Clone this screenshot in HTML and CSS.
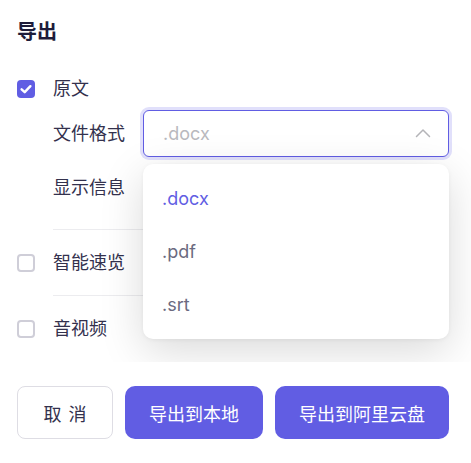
FILE: index.html
```html
<!DOCTYPE html>
<html lang="zh-CN">
<head>
<meta charset="utf-8">
<title>导出</title>
<link rel="stylesheet" href="styles.css">
</head>
<body>
<div class="dialog">
  <div class="content">
    <h1 class="title">导出</h1>

    <div class="row check-row">
      <span class="checkbox checked">
        <svg viewBox="0 0 18 18" width="18" height="18"><path d="M4.6 9.3 L7.7 12.2 L13.4 6.2" fill="none" stroke="#fff" stroke-width="2.4" stroke-linecap="round" stroke-linejoin="round"/></svg>
      </span>
      <span class="label">原文</span>
    </div>

    <div class="sub">
      <div class="field">
        <span class="field-label">文件格式</span>
        <div class="select-wrap">
          <div class="select">
            <span class="placeholder">.docx</span>
            <svg class="chev" viewBox="0 0 16 10" width="16" height="10"><path d="M1.5 8.5 L8 2 L14.5 8.5" fill="none" stroke="#b4b4b8" stroke-width="1.5" stroke-linecap="round" stroke-linejoin="round"/></svg>
          </div>
          <ul class="dropdown">
            <li class="opt active">.docx</li>
            <li class="opt">.pdf</li>
            <li class="opt">.srt</li>
          </ul>
        </div>
      </div>
      <div class="field info">
        <span class="field-label">显示信息</span>
      </div>
    </div>

    <div class="divider"></div>
    <div class="row check-row section">
      <span class="checkbox"></span>
      <span class="label">智能速览</span>
    </div>
    <div class="divider"></div>
    <div class="row check-row section">
      <span class="checkbox"></span>
      <span class="label">音视频</span>
    </div>
  </div>

  <div class="footer">
    <button class="btn cancel">取 消</button>
    <button class="btn primary">导出到本地</button>
    <button class="btn primary">导出到阿里云盘</button>
  </div>
</div>
</body>
</html>
```

FILE: styles.css
```css
* { box-sizing: border-box; }
html, body {
  margin: 0;
  padding: 0;
  background: #ffffff;
}
body {
  font-family: "Inter", "Noto Sans CJK SC", sans-serif;
  color: #33314d;
  width: 471px;
  height: 463px;
  overflow: hidden;
}
.dialog {
  display: flex;
  flex-direction: column;
  height: 463px;
}
.content {
  height: 362px;
  overflow: hidden;
  position: relative;
  padding: 18px 22px 0 17px;
}
.title {
  margin: 0 0 29px 0;
  font-size: 20px;
  line-height: 28px;
  font-weight: 700;
  color: #1e1c3a;
}
.row {
  display: flex;
  align-items: center;
  height: 28px;
}
.check-row { gap: 18px; }
.label {
  font-size: 18px;
  line-height: 28px;
  color: #33314d;
}
.checkbox {
  width: 18px;
  height: 18px;
  border-radius: 4px;
  border: 2px solid #cfced8;
  background: #fff;
  flex: none;
  display: flex;
}
.checkbox.checked {
  border: none;
  background: #605de3;
}
.sub {
  margin-left: 36px;
  padding-top: 7px;
}
.field {
  display: flex;
  align-items: center;
}
.field-label {
  width: 90px;
  flex: none;
  font-size: 18px;
  line-height: 28px;
  color: #33314d;
}
.select-wrap {
  position: relative;
  flex: 1;
}
.select {
  height: 47px;
  border: 1px solid #615de3;
  border-radius: 6px;
  box-shadow: 0 0 0 3px #e1e0fb;
  display: flex;
  align-items: center;
  justify-content: space-between;
  padding: 0 17px 0 19px;
  background: #fff;
}
.placeholder {
  font-size: 18px;
  color: #b9b9be;
}
.chev { display: block; margin-top: -1px; }
.dropdown {
  position: absolute;
  top: 54px;
  left: 0;
  right: 0;
  z-index: 5;
  margin: 0;
  padding: 8px 0;
  list-style: none;
  background: #fff;
  border-radius: 10px;
  box-shadow: 0 12px 44px rgba(0, 0, 0, 0.15), 0 1px 4px rgba(0, 0, 0, 0.05);
}
.opt {
  height: 53px;
  line-height: 53px;
  padding: 0 19px;
  font-size: 18px;
  color: #6b6a80;
}
.opt.active { color: #615de3; }
.field.info {
  margin-top: 17px;
  height: 28px;
  margin-bottom: 27px;
}
.divider {
  height: 1px;
  background: #ececef;
  margin-left: 36px;
}
.section {
  margin: 19px 0 18px;
}
.footer {
  display: flex;
  gap: 12px;
  padding: 24px 22px 0 17px;
}
.btn {
  height: 53px;
  font-family: "Noto Sans CJK SC", sans-serif;
  font-size: 18px;
  border-radius: 10px;
  padding: 0 24px;
  cursor: pointer;
}
.cancel {
  width: 96px;
  padding: 0;
  background: #fff;
  border: 1px solid #dedde4;
  border-radius: 8px;
  color: #33314d;
  word-spacing: 3px;
}
.primary {
  background: #615de3;
  border: none;
  color: #ffffff;
}
.primary:last-child { flex: 1; }
```
